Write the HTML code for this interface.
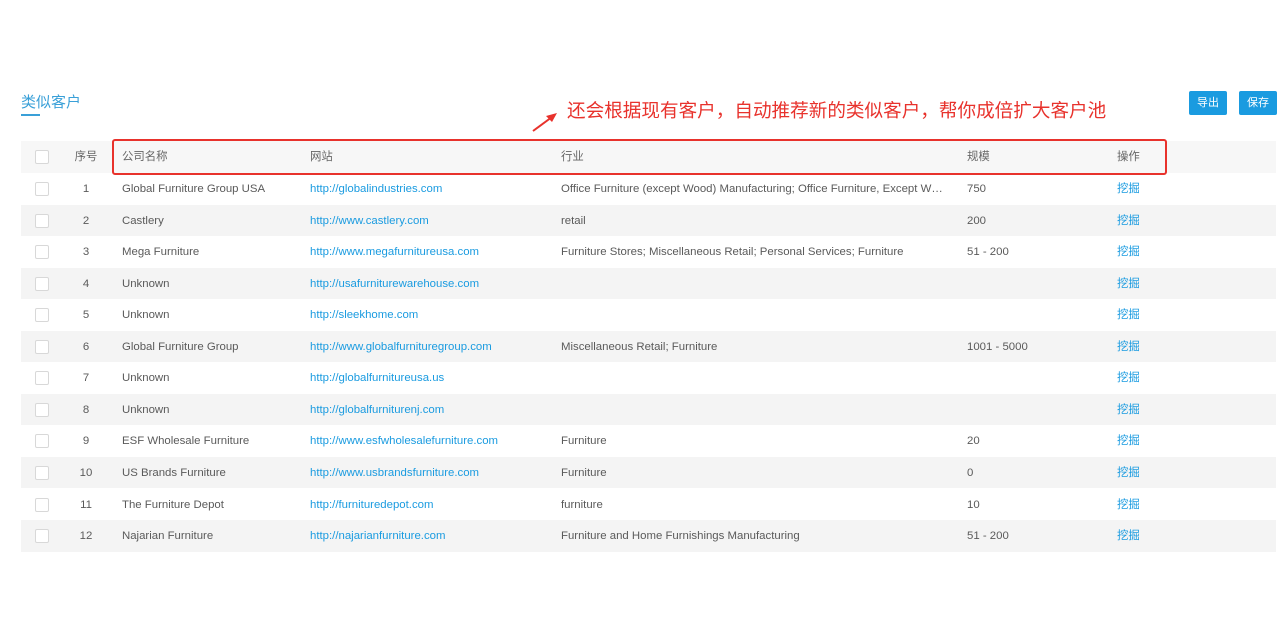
<!DOCTYPE html>
<html><head><meta charset="utf-8"><style>
body{margin:0;width:1280px;height:640px;background:#fff;font-family:"Liberation Sans","Noto Sans CJK SC",sans-serif;position:relative;overflow:hidden;font-size:11.4px;color:#5a5a5a}
.t{position:absolute;left:21px;top:91px;font-size:15px;color:#3aa0d8}
.ul{position:absolute;left:21px;top:114px;width:19px;height:2px;background:#3aa0d8}
.btn{position:absolute;top:91px;height:24px;width:38px;background:#1a9be0;color:#fff;font-size:11px;line-height:24px;text-align:center;border-radius:2px}
.row{position:absolute;left:21px;width:1255px;height:31.5px;line-height:32px}
.row.g{background:#f4f4f4}
.row span{position:absolute;white-space:nowrap}
.cb{position:absolute;left:14px;top:9px;width:12px;height:12px;border:1px solid #d8d8d8;background:#fff;border-radius:2px}
.a{color:#1a9be0}
.n{left:40px;width:50px;text-align:center}
.h{background:#f7f7f7;color:#666}
.red{position:absolute;left:112px;top:139px;width:1051px;height:32px;border:2px solid #e8322c;border-radius:3px}
.note{position:absolute;left:567px;top:96px;font-size:18.6px;color:#e8322c}
</style></head><body>
<div class="t">类似客户</div><div class="ul"></div>
<div class="btn" style="left:1189px">导出</div>
<div class="btn" style="left:1239px">保存</div>
<div class="note">还会根据现有客户，自动推荐新的类似客户，帮你成倍扩大客户池</div>
<svg style="position:absolute;left:530px;top:110px" width="30" height="24"><line x1="3" y1="21" x2="22" y2="7" stroke="#e8322c" stroke-width="2"/><polygon points="27,3 16,6 22,12" fill="#e8322c"/></svg>
<div class="row h" style="top:141px;height:32px;line-height:32px"><div class="cb"></div><span class="n">序号</span><span style="left:101px">公司名称</span><span style="left:289px">网站</span><span style="left:540px">行业</span><span style="left:946px">规模</span><span style="left:1096px">操作</span></div>
<div class="red"></div>
<div id="rows"></div>
<script>
var d=[["Global Furniture Group USA","http://globalindustries.com","Office Furniture (except Wood) Manufacturing; Office Furniture, Except W…","750"],
["Castlery","http://www.castlery.com","retail","200"],
["Mega Furniture","http://www.megafurnitureusa.com","Furniture Stores; Miscellaneous Retail; Personal Services; Furniture","51 - 200"],
["Unknown","http://usafurniturewarehouse.com","",""],
["Unknown","http://sleekhome.com","",""],
["Global Furniture Group","http://www.globalfurnituregroup.com","Miscellaneous Retail; Furniture","1001 - 5000"],
["Unknown","http://globalfurnitureusa.us","",""],
["Unknown","http://globalfurniturenj.com","",""],
["ESF Wholesale Furniture","http://www.esfwholesalefurniture.com","Furniture","20"],
["US Brands Furniture","http://www.usbrandsfurniture.com","Furniture","0"],
["The Furniture Depot","http://furnituredepot.com","furniture","10"],
["Najarian Furniture","http://najarianfurniture.com","Furniture and Home Furnishings Manufacturing","51 - 200"]];
var h="";d.forEach(function(r,i){h+='<div class="row'+(i%2?' g':'')+'" style="top:'+(173+i*31.55)+'px"><div class="cb"></div><span class="n">'+(i+1)+'</span><span style="left:101px">'+r[0]+'</span><span class="a" style="left:289px">'+r[1]+'</span><span style="left:540px">'+r[2]+'</span><span style="left:946px">'+r[3]+'</span><span class="a" style="left:1096px">挖掘</span></div>'});
document.getElementById("rows").innerHTML=h;
</script>
</body></html>
